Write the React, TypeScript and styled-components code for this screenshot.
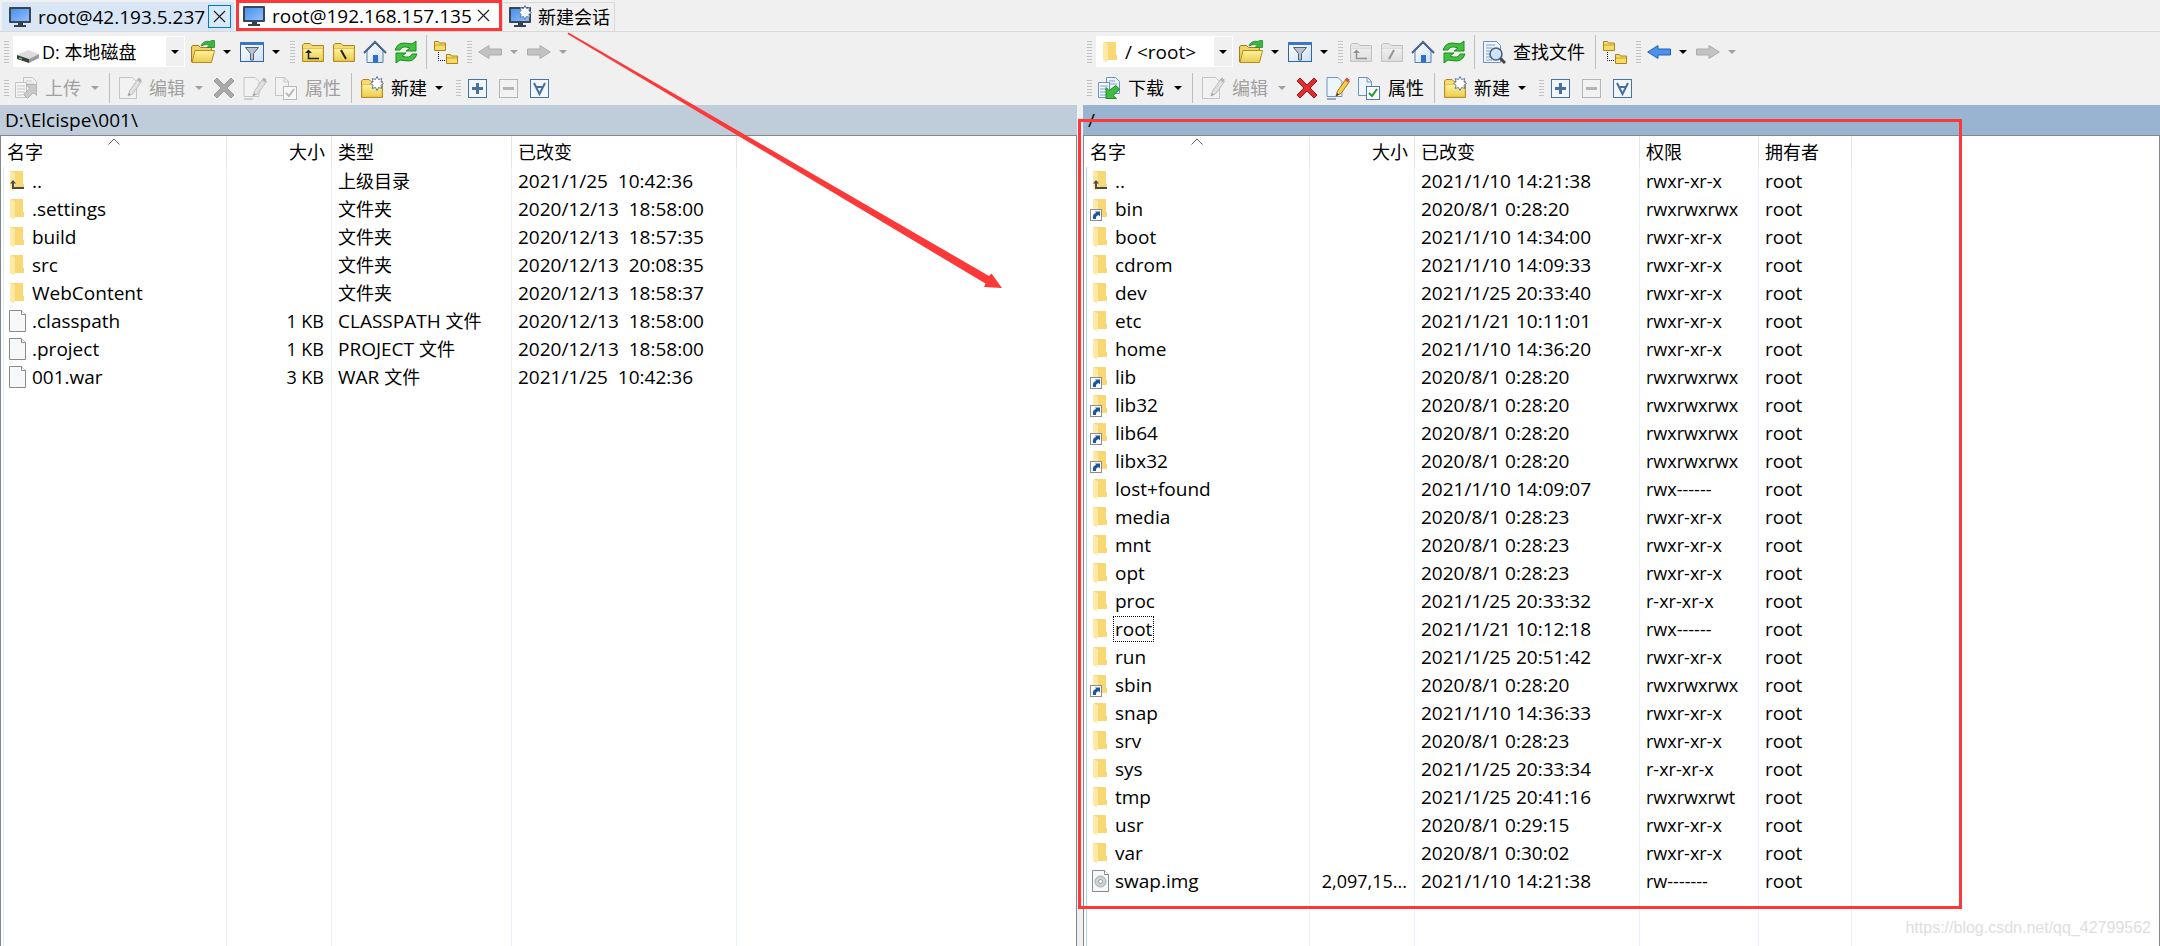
import React from 'react';
import styled, { createGlobalStyle, css } from 'styled-components';

const Global = createGlobalStyle`
  * { box-sizing: border-box; }
  body { margin: 0; background: #f0f0f0; }
  button, select { font: inherit; color: inherit; margin: 0; padding: 0; border: 0; background: none; }
`;

const cjk = css`
  font-size: 18px;
`;

const Window = styled.div`
  position: relative;
  display: flex;
  flex-direction: column;
  min-height: 100vh;
  overflow: hidden;
  font-family: 'Open Sans', 'Noto Sans CJK SC', sans-serif;
  font-size: 19px;
  line-height: 28px;
  color: #000;
  background: #f0f0f0;
`;

/* ---------- session tabs ---------- */

const TabBar = styled.nav`
  display: flex;
  align-items: flex-end;
  height: 32px;
  padding-left: 2px;
  border-bottom: 1px solid #d9d9d9;
`;

const Tab = styled.div<{ $kind: 'idle' | 'active' | 'new' }>`
  display: flex;
  align-items: center;
  height: ${p => (p.$kind === 'active' ? 31 : 29)}px;
  ${p => p.$kind === 'idle' && css`width: 232px; padding: 0 3px 0 6px; background: #d8e6f5;`}
  ${p => p.$kind === 'active' && css`
    width: 266px; padding: 0 4px 0 3px; margin: 0 0 0 2px;
    background: #fff; border: 3px solid #fc3838;
  `}
  ${p => p.$kind === 'new' && css`
    width: 113px; padding-left: 5px;
    border: 1px solid #d9d9d9; border-bottom: 0;
  `}
`;

const TabLabel = styled.button<{ $cjk?: boolean }>`
  display: flex;
  flex: 1;
  align-items: center;
  gap: 6px;
  white-space: nowrap;
  ${p => p.$cjk && cjk}
`;

const CloseButton = styled.button<{ $boxed?: boolean }>`
  display: flex;
  align-items: center;
  justify-content: center;
  width: 23px;
  height: 23px;
  ${p => p.$boxed && css`border: 1px solid #0078d7; background: #d8eaf9;`}
`;

/* ---------- panes ---------- */

const Panes = styled.main`
  display: grid;
  flex: 1;
  grid-template-columns: minmax(0, 1fr) 6px minmax(0, 1fr);
`;

const Pane = styled.section`
  position: relative;
  display: flex;
  flex-direction: column;
  min-width: 0;
`;

const ToolRow = styled.div<{ $tall?: boolean }>`
  display: flex;
  align-items: center;
  height: ${p => (p.$tall ? 39 : 34)}px;
  padding-left: 4px;
`;

const Grip = styled.span<{ $short?: boolean; $lead?: number }>`
  width: 5px;
  height: ${p => (p.$short ? 17 : 22)}px;
  margin-left: ${p => p.$lead ?? 0}px;
  margin-right: ${p => (p.$short ? 1 : 2)}px;
  background: repeating-linear-gradient(#c3c3c3 0 1px, transparent 1px 3px);
`;

const Separator = styled.span<{ $tall?: boolean }>`
  width: 1px;
  height: ${p => (p.$tall ? 34 : 30)}px;
  margin: 0 ${p => (p.$tall ? 3 : 4)}px 0 5px;
  background: #bdbdbd;
`;

const ToolButton = styled.button`
  display: flex;
  align-items: center;
  height: 30px;
  white-space: nowrap;
  ${cjk}
  &:disabled { color: #a0a0a0; }
  &:disabled svg { filter: grayscale(1) opacity(0.45); }
`;

const IconSlot = styled.span`
  display: flex;
  align-items: center;
  justify-content: center;
  width: 31px;
`;

const ToolText = styled.span`
  padding: 0 5px 0 4px;
`;

const DropButton = styled.button<{ $narrow?: boolean }>`
  display: flex;
  align-items: center;
  justify-content: center;
  width: ${p => (p.$narrow ? 14 : 18)}px;
  height: 30px;
  color: #000;
  &:disabled { color: #a0a0a0; }
`;

const Combo = styled.label<{ $width: number }>`
  display: flex;
  align-items: center;
  width: ${p => p.$width}px;
  height: 31px;
  margin: 0 2px;
  padding: 0 1px 0 4px;
  background: #fff;
`;

const ComboSelect = styled.select<{ $cjk?: boolean }>`
  flex: 1;
  min-width: 0;
  height: 30px;
  padding-left: 3px;
  appearance: none;
  outline: none;
  ${p => p.$cjk && cjk}
`;

const ComboArrow = styled.span`
  display: flex;
  align-items: center;
  justify-content: center;
  width: 18px;
  height: 29px;
  background: #f0f0f0;
`;

const PathBar = styled.div<{ $active?: boolean }>`
  height: 30px;
  padding: 1px 5px 0;
  background: ${p => (p.$active ? '#99b4d1' : '#bfcddb')};
`;

/* ---------- file list ---------- */

const List = styled.div`
  display: flex;
  flex: 1;
  border: 1px solid #828790;
  border-bottom: 0;
  background: #fff;
`;

const Table = styled.table<{ $edge: string }>`
  flex: 1;
  width: 100%;
  border-collapse: separate;
  border-spacing: 0;
  table-layout: fixed;
  td:first-child {
    background: linear-gradient(${p => p.$edge}, ${p => p.$edge}) 2px 0 / 1px 100% no-repeat;
  }
`;

const Th = styled.th<{ $right?: boolean }>`
  position: relative;
  height: 31px;
  padding: ${p => (p.$right ? '1px 6px 0' : '1px 6px 0')};
  font-weight: 400;
  ${cjk}
  text-align: ${p => (p.$right ? 'right' : 'left')};
  white-space: nowrap;
  border-right: 1px solid #e5e5e5;
  &:last-child { border-right: 0; }
`;

const SortMark = styled.svg`
  position: absolute;
  top: 2px;
  left: 50%;
  margin-left: -6px;
`;

const Td = styled.td<{ $variant?: 'name' | 'size' | 'perm' | 'type' }>`
  height: 28px;
  padding: 0 0 0 6px;
  overflow: hidden;
  white-space: pre;
  border-right: 1px solid #e8f1fb;
  &:last-child { border-right: 0; }
  ${p => p.$variant === 'size' && css`padding: 0 7px 0 0; text-align: right; font-size: 18px;`}
  ${p => (p.$variant === 'perm' || p.$variant === 'type') && css`font-size: 18px;`}
`;

const Filler = styled.tr`
  td { height: auto; padding: 0; }
`;

const NameCell = styled.span`
  display: flex;
  align-items: center;
  height: 28px;
`;

const FileName = styled.span<{ $focused?: boolean }>`
  height: 26px;
  line-height: 24px;
  margin-left: 1px;
  padding: 0 1px;
  border: 1px dotted ${p => (p.$focused ? '#000' : 'transparent')};
`;

const Extension = styled.span`
  font-size: 19px;
`;

/* ---------- annotations ---------- */

const Frame = styled.div`
  position: absolute;
  top: 87px;
  left: -5px;
  width: 884px;
  height: 790px;
  border: 3px solid #fc3838;
  pointer-events: none;
`;

const Pointer = styled.svg`
  position: absolute;
  top: 0;
  left: 0;
  pointer-events: none;
`;

const Watermark = styled.span`
  position: absolute;
  right: 9px;
  bottom: 4px;
  font-family: 'Liberation Sans', sans-serif;
  font-size: 16px;
  color: #dedede;
`;

/* ---------- icons ---------- */

const Caret = () => (
  <svg width="8" height="4" viewBox="0 0 8 4"><path d="M0 0h8L4 4z" fill="currentColor" /></svg>
);

const Cross = () => (
  <svg width="13" height="13" viewBox="0 0 13 13"><path d="M1 1l11 11M12 1L1 12" stroke="#222" strokeWidth="1.2" /></svg>
);

const star = 'M17 .5l1.500 3 3.300-.9-.9 3.200 2.600 1.700-2.600 1.700.9 3.200-3.300-.9-1.500 3-1.500-3-3.300.9.9-3.200-2.600-1.700 2.600-1.700-.9-3.200 3.300.9z';

const Monitor = ({ spark }: { spark?: boolean }) => (
  <svg width="24" height="24" viewBox="0 0 24 24">
    <defs>
      <linearGradient id="screen" x1="0" y1="0" x2="1" y2="1">
        <stop offset="0" stopColor="#4a8fea" /><stop offset="1" stopColor="#8fc0ff" />
      </linearGradient>
    </defs>
    <rect x="1" y="2" width="22" height="16" rx="1" fill="#3b4654" />
    <rect x="3" y="4" width="18" height="12" fill="url(#screen)" />
    <path d="M10 18h5v2h3v2H6v-2h4z" fill="#36404c" />
    {spark && <path d={star} fill="#f4f8fd" stroke="#5d7fa6" />}
  </svg>
);

const Drive = () => (
  <svg width="22" height="24" viewBox="0 0 22 24">
    <path d="M0 15l11-5 11 4-10 5z" fill="#dcdcdc" />
    <path d="M0 15l12 4v4L0 19z" fill="#3d3d3d" />
    <path d="M12 19l10-5v4l-10 5z" fill="#9b9b9b" />
    <path d="M2 18l3 1" stroke="#46d44a" strokeWidth="1.5" />
  </svg>
);

const FolderDefs = () => (
  <defs>
    <linearGradient id="gold" x1="0" y1="0" x2="0" y2="1">
      <stop offset="0" stopColor="#fdf3a0" /><stop offset="1" stopColor="#edcd4c" />
    </linearGradient>
    <linearGradient id="sheet" x1="0" y1="0" x2="1" y2="1">
      <stop offset="0" stopColor="#fff" /><stop offset="1" stopColor="#cfe0f5" />
    </linearGradient>
  </defs>
);

const OpenFolder = () => (
  <svg width="24" height="24" viewBox="0 0 24 24">
    <FolderDefs />
    <path d="M.5 22V7l1-1.500h6l2 2h11v3" fill="#efd165" stroke="#a67c1c" />
    <path d="M1 22.500L4 10.500h19.500l-3 12z" fill="url(#gold)" stroke="#b58a20" />
    <path d="M10 6q2-6 9-4.500L20.500.5h3V7.500H16l2.500-2.500q-4-1.500-8.500 1z" fill="#39b83c" stroke="#1f8a2a" strokeWidth="0.8" />
  </svg>
);

const Filter = () => (
  <svg width="24" height="22" viewBox="0 0 24 22">
    <FolderDefs />
    <rect x="0.5" y="1.5" width="23" height="19" fill="url(#sheet)" stroke="#2c63b5" />
    <path d="M0 1h24v3H0z" fill="#3a76c8" />
    <path d="M5.500 6.500h13l-5 6v6.500h-3v-6.500z" fill="#b9c3cf" stroke="#4f5f72" />
  </svg>
);

const Folder = ({ mark }: { mark: 'up' | 'back' | 'slash' | 'new' }) => (
  <svg width="24" height="24" viewBox="0 0 24 24">
    <FolderDefs />
    <path d="M1.500 21.500V5l1.500-1.500h6l2 2h11.500v16z" fill="#f5dc70" stroke="#ad8320" />
    <path d="M2 8.500h20v12.500H2z" fill="url(#gold)" stroke="#d5ac38" strokeWidth="0.6" />
    {mark === 'up' && (
      <>
        <path d="M7.500 12v6.500H18" fill="none" stroke="#222" strokeWidth="1.6" />
        <path d="M4 13l3.500-3.500L11 13z" fill="#222" />
      </>
    )}
    {mark === 'back' && <path d="M9 10l5 9" stroke="#222" strokeWidth="2" />}
    {mark === 'slash' && <path d="M14 10l-5 9" stroke="#222" strokeWidth="2" />}
    {mark === 'new' && <path d={star} fill="#fff" stroke="#5d7fa6" />}
  </svg>
);

const Home = () => (
  <svg width="24" height="24" viewBox="0 0 24 24">
    <FolderDefs />
    <path d="M4 11l8-8 8 8v11.500H4z" fill="url(#sheet)" stroke="#5f7fa8" />
    <path d="M1 13L12 2l11 11" fill="none" stroke="#47658d" strokeWidth="2" />
    <path d="M10 15h5v7.500h-5z" fill="#2a6fd0" />
  </svg>
);

const Refresh = () => (
  <svg width="24" height="24" viewBox="0 0 24 24">
    <path d="M1 10Q4 1 14 3.500L18 4l4-3v10H12l4-3Q8 5 6 10z" fill="#43c33f" stroke="#1e8a22" />
    <path d="M23 14q-3 9-13 6.500L6 20l-4 3V13h10l-4 3q8 3 10-2z" fill="#43c33f" stroke="#1e8a22" />
  </svg>
);

const Tree = () => (
  <svg width="24" height="24" viewBox="0 0 24 24">
    <path d="M.5 10.500v-9h4l1 1.500h6v7.500zM12.500 23.500v-9h4l1 1.500h6v7.500z" fill="#f6dc62" stroke="#ad8320" />
    <path d="M1 5h10M13 18h10" stroke="#c9a02f" />
    <path d="M4.500 12v8.500h7" fill="none" stroke="#111" strokeDasharray="1 1" />
  </svg>
);

const ArrowIcon = ({ dir }: { dir: 'left' | 'right' }) => (
  <svg width="24" height="16" viewBox="0 0 24 16">
    <path
      d={dir === 'left' ? 'M.7 8L11 1.500v3.500h12.500v6H11v3.500z' : 'M23.300 8L13 1.500v3.500H.5v6H13v3.500z'}
      fill="#4d92ea" stroke="#2361b6"
    />
  </svg>
);

const Transfer = ({ dir }: { dir: 'up' | 'down' }) => (
  <svg width="24" height="24" viewBox="0 0 24 24">
    <path d="M9.500 1.500h9l4 4v12h-13z" fill="#eef4fc" stroke="#6f93bf" />
    <path d="M1.500 6.500h11v15h-11z" fill="#f5f9ff" stroke="#6f93bf" />
    <path d="M3 10h8M3 13h8M3 16h8M3 19h6M12 5h6M12 8h8" stroke="#7ba0cc" />
    <path
      d={dir === 'up' ? 'M22.500 8.500v11l-3-3-6 6-4-4 6-6-3.500-4z' : 'M9 22.500v-11l3 3 7-5 3.500 4-6.500 6 3.500 3z'}
      fill="#3fbd3e" stroke="#1e8a2a"
    />
  </svg>
);

const Pencil = () => (
  <g>
    <path d="M10 20l1.500-5L20 3l3.500 2.500L15 17.500z" fill="#f7cf45" stroke="#9b7a2b" />
    <path d="M19 4l1.700-2.500 3 2.200L22 6.500z" fill="#d94b3c" />
    <path d="M10 20l1-3 2 1.500z" fill="#333" />
  </g>
);

const Edit = () => (
  <svg width="24" height="24" viewBox="0 0 24 24">
    <path d="M1.500 1.500h13l4 4v17h-17z" fill="#eff5fc" stroke="#6f93bf" />
    <Pencil />
  </svg>
);

const Rename = () => (
  <svg width="24" height="24" viewBox="0 0 24 24">
    <path d="M1 1.500h11l4 4v15H1z" fill="#eff5fc" stroke="#6f93bf" />
    <path d="M1 23h9" stroke="#3e5f8c" />
    <Pencil />
  </svg>
);

const Props = () => (
  <svg width="24" height="24" viewBox="0 0 24 24">
    <path d="M1.500 1.500h9l4 4v14h-13z" fill="#eff5fc" stroke="#6f93bf" />
    <path d="M10 1.500v4.500h4.500" fill="none" stroke="#6f93bf" />
    <rect x="9.5" y="10.5" width="13" height="13" fill="#fff" stroke="#4c79b0" />
    <path d="M12 17l3 3 5-7" fill="none" stroke="#1d9a2b" strokeWidth="2" />
  </svg>
);

const Delete = () => (
  <svg width="22" height="22" viewBox="0 0 22 22">
    <path d="M4 1l7 7 7-7 3 3-7 7 7 7-3 3-7-7-7 7-3-3 7-7-7-7z" fill="#e02d2d" stroke="#a81414" />
  </svg>
);

const Find = () => (
  <svg width="24" height="24" viewBox="0 0 24 24">
    <path d="M1.500 1.500h13l4 4v17h-17z" fill="#eff5fc" stroke="#6f93bf" />
    <path d="M4 5h9M4 8h6M4 11h4M4 14h4M4 17h4M4 20h6" stroke="#7ba0cc" />
    <circle cx="14" cy="14" r="6" fill="#cfe3f8" stroke="#4a637f" strokeWidth="1.6" />
    <path d="M18.500 18.500L23 23" stroke="#444" strokeWidth="3" />
  </svg>
);

const BoxIcon = ({ mark }: { mark: 'plus' | 'minus' | 'all' }) => (
  <svg width="19" height="19" viewBox="0 0 19 19">
    <rect x="0.5" y="0.5" width="18" height="18" fill="#f0f6fc" stroke="#4a729f" />
    {mark === 'plus' && <path d="M4 9.500h11M9.500 4v11" stroke="#47709f" strokeWidth="3" />}
    {mark === 'minus' && <path d="M4 9.500h11" stroke="#47709f" strokeWidth="3" />}
    {mark === 'all' && <path d="M4 4l5.500 11L15 4M6 8h7" fill="none" stroke="#47709f" strokeWidth="2" />}
  </svg>
);

type FileKind = 'up' | 'folder' | 'link' | 'file' | 'image';

const FileIcon = ({ kind }: { kind: FileKind }) =>
  kind === 'file' || kind === 'image' ? (
    <svg width="22" height="24" viewBox="0 0 22 24">
      <path d="M2.500 1.500h12l4 4v17h-16z" fill="#f7f8f9" stroke="#8a8a8a" />
      <path d="M14.500 1.500v4h4" fill="#fff" stroke="#8a8a8a" />
      {kind === 'image' && (
        <>
          <circle cx="10.5" cy="12.5" r="5.5" fill="#cdd2d4" stroke="#a5abae" />
          <circle cx="10.5" cy="12.5" r="2" fill="#fff" stroke="#999" />
        </>
      )}
    </svg>
  ) : (
    <svg width="22" height="24" viewBox="0 0 22 24">
      <path d="M4 2h12v13h1v5H4z" fill="#f8d775" />
      <path d="M3 2l5 2v15l-1.500 3.500L3 20z" fill="#ffe9a4" />
      {kind === 'up' && (
        <>
          <path d="M6 14v5h11" fill="none" stroke="#4a4a4a" strokeWidth="2" />
          <path d="M3 14.500l3-3.500 3 3.500z" fill="#4a4a4a" />
        </>
      )}
      {kind === 'link' && (
        <>
          <rect x="0.5" y="12.5" width="11" height="11" fill="#fff" stroke="#8c8c8c" />
          <path d="M3 22q-1-5 3-6l-1-1.500h5v5l-1.500-1.500q-3 1-2.500 4z" fill="#1f5599" />
        </>
      )}
    </svg>
  );

/* ---------- data ---------- */

interface LocalEntry { kind: FileKind; name: string; size?: string; ext?: string; type: string; changed: string }
interface RemoteEntry { kind: FileKind; name: string; size?: string; changed: string; perm: string; focused?: boolean }

const localEntries: LocalEntry[] = [
  { kind: 'up', name: '..', type: '上级目录', changed: '2021/1/25  10:42:36' },
  { kind: 'folder', name: '.settings', type: '文件夹', changed: '2020/12/13  18:58:00' },
  { kind: 'folder', name: 'build', type: '文件夹', changed: '2020/12/13  18:57:35' },
  { kind: 'folder', name: 'src', type: '文件夹', changed: '2020/12/13  20:08:35' },
  { kind: 'folder', name: 'WebContent', type: '文件夹', changed: '2020/12/13  18:58:37' },
  { kind: 'file', name: '.classpath', size: '1 KB', ext: 'CLASSPATH ', type: '文件', changed: '2020/12/13  18:58:00' },
  { kind: 'file', name: '.project', size: '1 KB', ext: 'PROJECT ', type: '文件', changed: '2020/12/13  18:58:00' },
  { kind: 'file', name: '001.war', size: '3 KB', ext: 'WAR ', type: '文件', changed: '2021/1/25  10:42:36' },
];

const DIR = 'rwxr-xr-x';
const LINK = 'rwxrwxrwx';

const remoteEntries: RemoteEntry[] = [
  { kind: 'up', name: '..', changed: '2021/1/10 14:21:38', perm: DIR },
  { kind: 'link', name: 'bin', changed: '2020/8/1 0:28:20', perm: LINK },
  { kind: 'folder', name: 'boot', changed: '2021/1/10 14:34:00', perm: DIR },
  { kind: 'folder', name: 'cdrom', changed: '2021/1/10 14:09:33', perm: DIR },
  { kind: 'folder', name: 'dev', changed: '2021/1/25 20:33:40', perm: DIR },
  { kind: 'folder', name: 'etc', changed: '2021/1/21 10:11:01', perm: DIR },
  { kind: 'folder', name: 'home', changed: '2021/1/10 14:36:20', perm: DIR },
  { kind: 'link', name: 'lib', changed: '2020/8/1 0:28:20', perm: LINK },
  { kind: 'link', name: 'lib32', changed: '2020/8/1 0:28:20', perm: LINK },
  { kind: 'link', name: 'lib64', changed: '2020/8/1 0:28:20', perm: LINK },
  { kind: 'link', name: 'libx32', changed: '2020/8/1 0:28:20', perm: LINK },
  { kind: 'folder', name: 'lost+found', changed: '2021/1/10 14:09:07', perm: 'rwx------' },
  { kind: 'folder', name: 'media', changed: '2020/8/1 0:28:23', perm: DIR },
  { kind: 'folder', name: 'mnt', changed: '2020/8/1 0:28:23', perm: DIR },
  { kind: 'folder', name: 'opt', changed: '2020/8/1 0:28:23', perm: DIR },
  { kind: 'folder', name: 'proc', changed: '2021/1/25 20:33:32', perm: 'r-xr-xr-x' },
  { kind: 'folder', name: 'root', changed: '2021/1/21 10:12:18', perm: 'rwx------', focused: true },
  { kind: 'folder', name: 'run', changed: '2021/1/25 20:51:42', perm: DIR },
  { kind: 'link', name: 'sbin', changed: '2020/8/1 0:28:20', perm: LINK },
  { kind: 'folder', name: 'snap', changed: '2021/1/10 14:36:33', perm: DIR },
  { kind: 'folder', name: 'srv', changed: '2020/8/1 0:28:23', perm: DIR },
  { kind: 'folder', name: 'sys', changed: '2021/1/25 20:33:34', perm: 'r-xr-xr-x' },
  { kind: 'folder', name: 'tmp', changed: '2021/1/25 20:41:16', perm: 'rwxrwxrwt' },
  { kind: 'folder', name: 'usr', changed: '2020/8/1 0:29:15', perm: DIR },
  { kind: 'folder', name: 'var', changed: '2020/8/1 0:30:02', perm: DIR },
  { kind: 'image', name: 'swap.img', size: '2,097,15...', changed: '2021/1/10 14:21:38', perm: 'rw-------' },
];

/* ---------- composed parts ---------- */

interface ToolProps { icon: React.ReactNode; title: string; text?: string; disabled?: boolean }

const Tool = ({ icon, title, text, disabled }: ToolProps) => (
  <ToolButton type="button" aria-label={title} disabled={disabled}>
    <IconSlot>{icon}</IconSlot>
    {text && <ToolText>{text}</ToolText>}
  </ToolButton>
);

const Drop = ({ disabled, narrow }: { disabled?: boolean; narrow?: boolean }) => (
  <DropButton type="button" aria-label="更多" disabled={disabled} $narrow={narrow}><Caret /></DropButton>
);

const Toolbars = ({ remote }: { remote?: boolean }) => (
  <>
    <ToolRow $tall>
      <Grip />
      <Combo $width={remote ? 137 : 172}>
        {remote ? <FileIcon kind="folder" /> : <Drive />}
        <ComboSelect aria-label="位置" $cjk={!remote}>
          <option>{remote ? '/ <root>' : 'D: 本地磁盘'}</option>
        </ComboSelect>
        <ComboArrow><Caret /></ComboArrow>
      </Combo>
      <Tool icon={<OpenFolder />} title="打开目录" /><Drop />
      <Tool icon={<Filter />} title="过滤" /><Drop />
      <Grip $lead={5} />
      <Tool icon={<Folder mark="up" />} title="上级目录" disabled={remote} />
      <Tool icon={<Folder mark={remote ? 'slash' : 'back'} />} title="根目录" disabled={remote} />
      <Tool icon={<Home />} title="主目录" />
      <Tool icon={<Refresh />} title="刷新" />
      <Separator $tall />
      {remote && <><Tool icon={<Find />} title="查找文件" text="查找文件" /><Separator $tall /></>}
      <Tool icon={<Tree />} title="目录树" />
      <Grip $lead={6} />
      <Tool icon={<ArrowIcon dir="left" />} title="后退" disabled={!remote} /><Drop disabled={!remote} />
      <Tool icon={<ArrowIcon dir="right" />} title="前进" disabled /><Drop disabled />
    </ToolRow>
    <ToolRow>
      <Grip $short />
      <Tool
        icon={<Transfer dir={remote ? 'down' : 'up'} />}
        title={remote ? '下载' : '上传'} text={remote ? '下载' : '上传'} disabled={!remote}
      />
      <Drop disabled={!remote} />
      <Separator />
      <Tool icon={<Edit />} title="编辑" text="编辑" disabled /><Drop disabled />
      <Tool icon={<Delete />} title="删除" disabled={!remote} />
      <Tool icon={<Rename />} title="重命名" disabled={!remote} />
      <Tool icon={<Props />} title="属性" text="属性" disabled={!remote} />
      <Separator />
      <Tool icon={<Folder mark="new" />} title="新建" text="新建" /><Drop narrow />
      <Grip $short $lead={10} />
      <Tool icon={<BoxIcon mark="plus" />} title="选择" />
      <Tool icon={<BoxIcon mark="minus" />} title="取消选择" disabled />
      <Tool icon={<BoxIcon mark="all" />} title="全选" />
    </ToolRow>
  </>
);

const Sort = () => (
  <SortMark width="12" height="7" viewBox="0 0 12 7"><path d="M.5 6.500L6 1l5.500 5.500" fill="none" stroke="#666" /></SortMark>
);

const Name = ({ kind, name, focused }: { kind: FileKind; name: string; focused?: boolean }) => (
  <NameCell>
    <FileIcon kind={kind} />
    <FileName $focused={focused}>{name}</FileName>
  </NameCell>
);

const FillerRow = ({ columns }: { columns: number }) => (
  <Filler aria-hidden="true">
    {Array.from({ length: columns }, (_, i) => <Td key={i} />)}
  </Filler>
);

const Columns = ({ widths }: { widths: number[] }) => (
  <colgroup>
    {widths.map((width, i) => <col key={i} style={{ width }} />)}
    <col />
  </colgroup>
);

export default function App() {
  return (
    <Window>
      <Global />
      <TabBar>
        <Tab $kind="idle">
          <TabLabel type="button"><Monitor />root@42.193.5.237</TabLabel>
          <CloseButton type="button" aria-label="关闭" $boxed><Cross /></CloseButton>
        </Tab>
        <Tab $kind="active">
          <TabLabel type="button"><Monitor />root@192.168.157.135</TabLabel>
          <CloseButton type="button" aria-label="关闭"><Cross /></CloseButton>
        </Tab>
        <Tab $kind="new">
          <TabLabel type="button" $cjk><Monitor spark />新建会话</TabLabel>
        </Tab>
      </TabBar>
      <Panes>
        <Pane>
          <Toolbars />
          <PathBar>D:\Elcispe\001\</PathBar>
          <List>
            <Table $edge="#e0ebf7">
              <Columns widths={[226, 105, 180, 225]} />
              <thead>
                <tr><Th>名字<Sort /></Th><Th $right>大小</Th><Th>类型</Th><Th>已改变</Th><Th /></tr>
              </thead>
              <tbody>
                {localEntries.map(e => (
                  <tr key={e.name}>
                    <Td $variant="name"><Name kind={e.kind} name={e.name} /></Td>
                    <Td $variant="size">{e.size}</Td>
                    <Td $variant="type">{e.ext && <Extension>{e.ext}</Extension>}{e.type}</Td>
                    <Td>{e.changed}</Td>
                    <Td />
                  </tr>
                ))}
                <FillerRow columns={5} />
              </tbody>
            </Table>
          </List>
        </Pane>
        <span />
        <Pane>
          <Toolbars remote />
          <PathBar $active>/</PathBar>
          <List>
            <Table $edge="#b5d3f5">
              <Columns widths={[226, 105, 225, 119, 93]} />
              <thead>
                <tr><Th>名字<Sort /></Th><Th $right>大小</Th><Th>已改变</Th><Th>权限</Th><Th>拥有者</Th><Th /></tr>
              </thead>
              <tbody>
                {remoteEntries.map(e => (
                  <tr key={e.name}>
                    <Td $variant="name"><Name kind={e.kind} name={e.name} focused={e.focused} /></Td>
                    <Td $variant="size">{e.size}</Td>
                    <Td>{e.changed}</Td>
                    <Td $variant="perm">{e.perm}</Td>
                    <Td>root</Td>
                    <Td />
                  </tr>
                ))}
                <FillerRow columns={6} />
              </tbody>
            </Table>
          </List>
          <Frame />
        </Pane>
      </Panes>
      <Pointer width="1010" height="300" viewBox="0 0 1010 300">
        <path d="M568.500 32.500L989 276l2.500-2.500L1002 288l-18-1 1.500-3.500L567.500 34z" fill="#fc3838" />
      </Pointer>
      <Watermark>https://blog.csdn.net/qq_42799562</Watermark>
    </Window>
  );
}
